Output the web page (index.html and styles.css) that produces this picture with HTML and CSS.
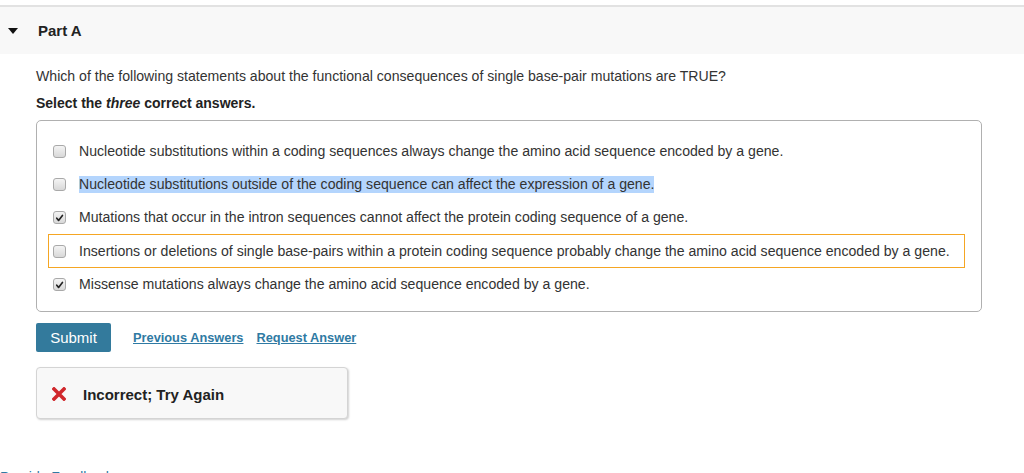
FILE: index.html
```html
<!DOCTYPE html>
<html>
<head>
<meta charset="utf-8">
<link rel="stylesheet" href="styles.css">
</head>
<body>
<div class="part-header">
  <span class="caret"></span>
  <span class="part-title">Part A</span>
</div>
<div class="content">
  <p class="question">Which of the following statements about the functional consequences of single base-pair mutations are TRUE?</p>
  <p class="instruction">Select the <em>three</em> correct answers.</p>
  <div class="answers">
    <div class="option"><span class="cb"></span><span class="label">Nucleotide substitutions within a coding sequences always change the amino acid sequence encoded by a gene.</span></div>
    <div class="option"><span class="cb"></span><span class="label selected-text">Nucleotide substitutions outside of the coding sequence can affect the expression of a gene.</span></div>
    <div class="option"><span class="cb checked"><svg viewBox="0 0 12 12" width="12" height="12"><path d="M3 6.2 L5 8.6 L9.2 3.2" fill="none" stroke="#222" stroke-width="1.8" stroke-linecap="round" stroke-linejoin="round"/></svg></span><span class="label">Mutations that occur in the intron sequences cannot affect the protein coding sequence of a gene.</span></div>
    <div class="option focused"><span class="cb"></span><span class="label">Insertions or deletions of single base-pairs within a protein coding sequence probably change the amino acid sequence encoded by a gene.</span></div>
    <div class="option"><span class="cb checked"><svg viewBox="0 0 12 12" width="12" height="12"><path d="M3 6.2 L5 8.6 L9.2 3.2" fill="none" stroke="#222" stroke-width="1.8" stroke-linecap="round" stroke-linejoin="round"/></svg></span><span class="label">Missense mutations always change the amino acid sequence encoded by a gene.</span></div>
  </div>
  <div class="actions">
    <button class="submit">Submit</button>
    <a class="link" href="#">Previous Answers</a>
    <a class="link" href="#">Request Answer</a>
  </div>
  <div class="feedback">
    <svg class="x-icon" viewBox="0 0 14 14" width="14" height="14"><path d="M2 2 L12 12 M12 2 L2 12" stroke="#d0282c" stroke-width="3.6" stroke-linecap="square"/></svg>
    <span class="feedback-text">Incorrect; Try Again</span>
  </div>
</div>
<div class="footer-link"><a href="#">Provide Feedback</a></div>
</body>
</html>
```
FILE: styles.css
```css
html, body {
  margin: 0;
  padding: 0;
  background: #fff;
  overflow: hidden;
  height: 473px;
}
body {
  font-family: "Liberation Sans", Arial, Helvetica, sans-serif;
  color: #333;
}
.part-header {
  margin-top: 5px;
  border-top: 2px solid #e2e2e2;
  background: #f8f8f8;
  height: 47px;
  display: flex;
  align-items: center;
}
.caret {
  width: 0;
  height: 0;
  margin-left: 8px;
  border-left: 5px solid transparent;
  border-right: 5px solid transparent;
  border-top: 6px solid #111;
}
.part-title {
  margin-left: 20px;
  font-weight: bold;
  font-size: 15px;
  color: #222;
}
.content {
  padding-left: 36px;
  padding-top: 13px;
}
.question {
  margin: 0;
  font-size: 14.1px;
  line-height: 18px;
}
.instruction {
  margin: 9px 0 0 0;
  font-size: 14px;
  line-height: 18px;
  font-weight: bold;
  color: #222;
}
.instruction em {
  font-style: italic;
}
.answers {
  margin-top: 8px;
  width: 933px;
  border: 1px solid #b0b0b0;
  border-radius: 5px;
  padding: 14px 0 10px 11px;
  box-sizing: content-box;
}
.option {
  display: flex;
  align-items: center;
  width: 915px;
  height: 31px;
  border: 1px solid transparent;
  font-size: 14.12px;
  color: #333;
}
.option.focused {
  border-color: #f5a623;
  height: 32px;
}
.cb {
  width: 11px;
  height: 11px;
  margin-left: 4px;
  margin-right: 13px;
  border: 1px solid #a9a9a9;
  border-radius: 3px;
  background: linear-gradient(#f4f4f4, #d8d8d8);
  display: flex;
  align-items: center;
  justify-content: center;
  flex-shrink: 0;
}
.cb svg {
  display: block;
}
.label {
  line-height: 17px;
}
.selected-text {
  background: #b4d5fd;
}
.actions {
  display: flex;
  align-items: center;
  margin-top: 11px;
}
.submit {
  width: 75px;
  height: 29px;
  border: none;
  border-radius: 2px;
  background: #337a9c;
  color: #fff;
  font-family: "Liberation Sans", Arial, sans-serif;
  font-size: 15px;
  padding: 0;
}
.link {
  font-size: 12.8px;
  font-weight: bold;
  color: #2f7aa3;
  text-decoration: underline;
  margin-left: 22px;
}
.link + .link {
  margin-left: 13px;
}
.feedback {
  margin-top: 15px;
  border: 1px solid #d4d4d4;
  border-radius: 4px;
  background: #f8f8f8;
  box-shadow: 1px 1px 2px rgba(0,0,0,0.18);
  display: flex;
  align-items: center;
  padding-top: 2px;
  box-sizing: border-box;
  height: 52px;
  width: 312px;
}
.x-icon {
  margin-left: 15px;
  display: block;
}
.feedback-text {
  margin-left: 17px;
  font-size: 15px;
  font-weight: bold;
  color: #222;
}
.footer-link {
  margin-top: 50px;
  padding-left: 0;
  font-size: 14px;
}
.footer-link a {
  color: #2f7aa3;
  text-decoration: none;
}
```
